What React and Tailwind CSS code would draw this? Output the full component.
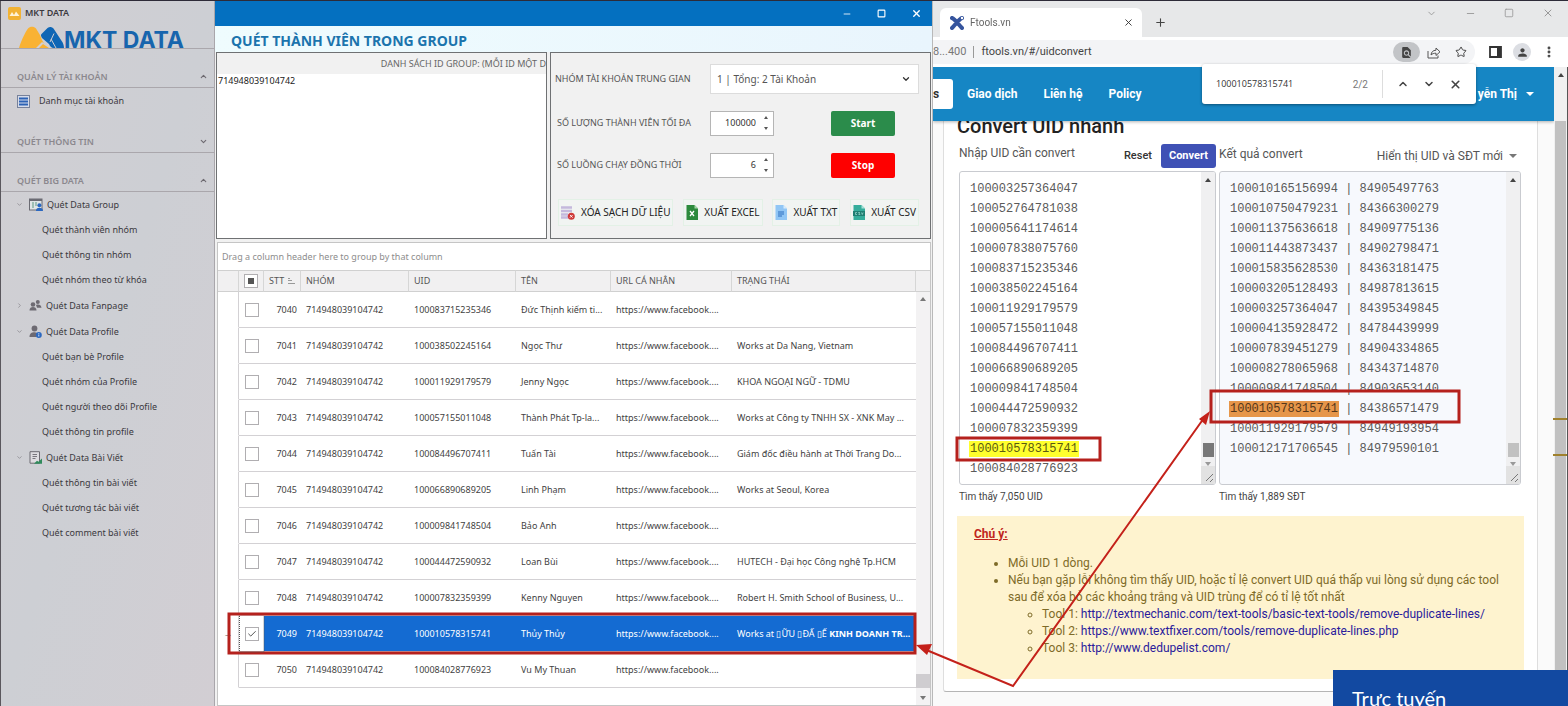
import React, { useState } from "react";
import {
  Check,
  ChevronDown,
  ChevronRight,
  ChevronUp,
  EllipsisVertical,
  Minus,
  Plus,
  Square,
  Star,
  X,
} from "lucide-react";
import { MdFindInPage, MdPerson } from "react-icons/md";

const groupRows = [
  { stt: 7040, uid: "100083715235346", name: "Đức Thịnh kiếm ti...", status: "" },
  { stt: 7041, uid: "100038502245164", name: "Ngọc Thư", status: "Works at Da Nang, Vietnam" },
  { stt: 7042, uid: "100011929179579", name: "Jenny Ngọc", status: "KHOA NGOẠI NGỮ - TDMU" },
  { stt: 7043, uid: "100057155011048", name: "Thành Phát Tp-la...", status: "Works at Công ty TNHH SX - XNK May ..." },
  { stt: 7044, uid: "100084496707411", name: "Tuấn Tài", status: "Giám đốc điều hành at Thời Trang Do..." },
  { stt: 7045, uid: "100066890689205", name: "Linh Phạm", status: "Works at Seoul, Korea" },
  { stt: 7046, uid: "100009841748504", name: "Bảo Anh", status: "" },
  { stt: 7047, uid: "100044472590932", name: "Loan Bùi", status: "HUTECH - Đại học Công nghệ Tp.HCM" },
  { stt: 7048, uid: "100007832359399", name: "Kenny Nguyen", status: "Robert H. Smith School of Business, U..." },
  { stt: 7049, uid: "100010578315741", name: "Thủy Thủy", status: "Works at", selected: true },
  { stt: 7050, uid: "100084028776923", name: "Vu My Thuan", status: "" },
];

const inputUids = [
  "100003257364047",
  "100052764781038",
  "100005641174614",
  "100007838075760",
  "100083715235346",
  "100038502245164",
  "100011929179579",
  "100057155011048",
  "100084496707411",
  "100066890689205",
  "100009841748504",
  "100044472590932",
  "100007832359399",
  "100010578315741",
  "100084028776923",
].join("\n");

const outputUids = [
  "100010165156994 | 84905497763",
  "100010750479231 | 84366300279",
  "100011375636618 | 84909775136",
  "100011443873437 | 84902798471",
  "100015835628530 | 84363181475",
  "100003205128493 | 84987813615",
  "100003257364047 | 84395349845",
  "100004135928472 | 84784439999",
  "100007839451279 | 84904334865",
  "100008278065968 | 84343714870",
  "100009841748504 | 84903653140",
  "100010578315741 | 84386571479",
  "100011929179579 | 84949193954",
  "100012171706545 | 84979590101",
].join("\n");

const GroupIcon = () => (
  <svg width="14" height="13" viewBox="0 0 14 13">
    <rect x="0.5" y="1" width="12.5" height="11" fill="#dfe5e6" stroke="#6b6b73" />
    <rect x="0.5" y="1" width="12.5" height="2" fill="#6b6b73" />
    <path d="M3 5h2M6 5h2M3 7h2M6 7h2M3 9h2" stroke="#5d9a83" />
    <circle cx="10.4" cy="7.3" r="2" fill="#2b68c0" />
    <path d="M7 13c0-2.4 1.300-3.300 3.400-3.300S14 10.600 14 13z" fill="#2b68c0" />
  </svg>
);

const FanpageIcon = () => (
  <svg width="13" height="13" viewBox="0 0 13 13" fill="#6d6a72">
    <circle cx="4" cy="5.500" r="2.300" />
    <circle cx="8.800" cy="3" r="2" />
    <path d="M0.500 11.500c0-2.500 1.500-3.500 3.500-3.500s3.500 1 3.500 3.500z" />
    <path d="M7 6c3-1 5 0 5.500 2.800L8 8.800z" />
  </svg>
);

const ProfileIcon = () => (
  <svg width="13" height="13" viewBox="0 0 13 13">
    <circle cx="5.500" cy="3.500" r="2.900" fill="#6d6a72" />
    <path d="M0.500 12c0-3.500 2-4.800 5-4.800 2 0 3.500 1 4 2.500L7 12z" fill="#6d6a72" />
    <circle cx="9.800" cy="10" r="3" fill="#2b68c0" />
    <path d="M9.800 9.500v2M9.800 8v0.800" stroke="#dfe8f5" strokeWidth="0.900" />
  </svg>
);

const PostIcon = () => (
  <svg width="13" height="13" viewBox="0 0 13 13">
    <path d="M1 0.700h9.500v11.500H1z" fill="#dedce0" stroke="#6d6a72" />
    <path d="M3.500 3.500h4.500M3.500 5.500h4.500M3.500 7.500h3" stroke="#6d6a72" strokeWidth="0.900" />
    <path d="M5 12.800l3-3 1.500 1L13 7.500v5.300z" fill="#2f8a5b" />
  </svg>
);

const menuGroups = [
  {
    title: "Quét Data Group",
    icon: <GroupIcon />,
    open: true,
    items: ["Quét thành viên nhóm", "Quét thông tin nhóm", "Quét nhóm theo từ khóa"],
  },
  { title: "Quét Data Fanpage", icon: <FanpageIcon />, open: false, items: [] },
  {
    title: "Quét Data Profile",
    icon: <ProfileIcon />,
    open: true,
    items: ["Quét bạn bè Profile", "Quét nhóm của Profile", "Quét người theo dõi Profile", "Quét thông tin profile"],
  },
  {
    title: "Quét Data Bài Viết",
    icon: <PostIcon />,
    open: true,
    items: ["Quét thông tin bài viết", "Quét tương tác bài viết", "Quét comment bài viết"],
  },
];

const SectionHeader = ({ title, open }) => (
  <button className="flex h-5 w-full items-center justify-between border-b border-[#aaa7ac] pr-[6px] pb-[2px] pl-4 text-[9px] font-semibold text-[#8b888e]">
    {title}
    {open ? (
      <ChevronUp size={9} strokeWidth={3} className="text-[#6d6a70]" />
    ) : (
      <ChevronDown size={9} strokeWidth={3} className="text-[#6d6a70]" />
    )}
  </button>
);

const Sidebar = () => (
  <aside className="flex w-[215px] shrink-0 flex-col overflow-hidden border-r border-l border-r-[#a9a6ab] border-l-[#5a575d] bg-linear-to-br from-[#d1cfd3] via-[#cdcfd4] to-[#d2ced3] text-[9px] text-[#3b393e]">
    <div className="flex h-6 items-center gap-1 pl-[7px]">
      <svg width="13" height="13" viewBox="0 0 13 13">
        <rect width="13" height="13" rx="2" fill="#f2b233" />
        <path d="M1.500 9l2.500-4 2 3 2-3.500L11.500 9z" fill="#fff3d6" />
      </svg>
      <span className="font-semibold">MKT DATA</span>
    </div>
    <div className="flex h-6 items-end border-b border-[#aaa7ac] pl-[18px]">
      <svg width="45" height="22" viewBox="0 0 45 22" className="shrink-0">
        <path d="M0 22C1 18 6 6 9 2.500c2-2.500 6-2.500 8 0l4 6.500 2 5c2 4 5 8 9 8z" fill="#f9b233" />
        <path d="M17 22l6-6 9 6z" fill="#d1cfd3" />
        <path d="M20 22l4-4 6 4z" fill="#f9b233" />
        <path
          d="M22.500 8l6-6c2-1.500 4-1.500 6 0.500l8.500 13c2 3 2 6 2 6.500H35c-3 0-4-2-5-4L23 12c-1-2-1.500-3-0.500-4z"
          fill="#0f66b5"
        />
        <path d="M31 16l4-8.500M37 22l-5-9" stroke="#d1cfd3" strokeWidth="1" />
      </svg>
      <span className="font-['Inter',sans-serif] text-[23px] leading-4 font-bold whitespace-nowrap text-[#1765ad]">
        MKT DATA
      </span>
    </div>

    <div className="mt-[19px]">
      <SectionHeader title="QUẢN LÝ TÀI KHOẢN" open />
      <a href="#accounts" className="flex h-[26px] items-center gap-[9px] pl-4">
        <svg width="13" height="13" viewBox="0 0 13 13">
          <rect x="0.500" y="0.500" width="12" height="12" fill="#d6dcea" stroke="#77819a" />
          <path d="M2 3.500h9M2 6.500h9M2 9.500h9" stroke="#2c62b5" strokeWidth="2" />
        </svg>
        Danh mục tài khoản
      </a>
    </div>
    <div className="mt-[19px]">
      <SectionHeader title="QUÉT THÔNG TIN" />
    </div>
    <div className="mt-[19px]">
      <SectionHeader title="QUÉT BIG DATA" open />
    </div>

    <nav className="flex flex-col gap-px">
      {menuGroups.map((group) => (
        <div key={group.title}>
          <button className="flex h-[25px] w-full items-center gap-1 pl-[15px]">
            {group.open ? (
              <ChevronDown size={7} className="mr-[2px] text-[#77747a]" />
            ) : (
              <ChevronRight size={7} className="mr-[2px] text-[#77747a]" />
            )}
            {group.icon}
            {group.title}
          </button>
          {group.items.map((item) => (
            <a key={item} href="#scan" className="flex h-[25px] items-center pl-[41px]">
              {item}
            </a>
          ))}
        </div>
      ))}
    </nav>
  </aside>
);

const NumberField = ({ id, value }) => (
  <div className="flex h-[25px] w-16 items-center border border-[#b5b5b5] bg-white">
    <input
      id={id}
      defaultValue={value}
      className="w-full min-w-0 pr-[3px] text-right text-[9px] text-[#333] outline-none"
    />
    <div className="flex w-[14px] shrink-0 flex-col items-center gap-2">
      <button aria-label="Up" className="border-x-[2px] border-b-[3px] border-x-transparent border-b-[#555]" />
      <button aria-label="Down" className="border-x-[2px] border-t-[3px] border-x-transparent border-t-[#555]" />
    </div>
  </div>
);

const FileIcon = ({ dark, light, label }) => (
  <svg width="12" height="15" viewBox="0 0 12 15">
    <path d="M0.500 0h8l3.500 3.500V15H0.500z" fill={dark} />
    <path d="M8.500 0l3.500 3.500H8.500z" fill={light} />
    {label === "x" && <path d="M4 6l4 5M8 6l-4 5" stroke="#fff" strokeWidth="1.300" />}
    {label === "txt" && <path d="M3 7h6M3 9h6M3 11h4" stroke="#2c6fc0" strokeWidth="1.200" />}
    {label === "csv" && (
      <>
        <rect x="0" y="6" width="12" height="5" fill="#1f7f72" />
        <path d="M4 7.500H2.500v2H4M7 7.500H5.500L7 9.500H5.500M8.500 7.500l0.800 2 0.800-2" stroke="#9fded4" strokeWidth="0.700" fill="none" />
      </>
    )}
  </svg>
);

const ExportButton = ({ icon, label }) => (
  <button className="flex h-[27px] items-center gap-[6px] border border-[#e3f1e6] bg-[#f1f4f2] px-[2px] text-[10px] whitespace-nowrap text-[#222]">
    {icon}
    {label}
  </button>
);

const Controls = () => (
  <section className="flex min-w-0 flex-1 flex-col border border-[#6f7173] bg-[#f1f1f1] pr-[11px] text-[9px] text-[#555]">
    <div className="mt-[11px] flex h-[30px] items-center pl-1">
      <label htmlFor="middle-group" className="w-[155px]">
        NHÓM TÀI KHOẢN TRUNG GIAN
      </label>
      <div className="grid flex-1 items-center">
        <select
          id="middle-group"
          className="col-start-1 row-start-1 h-[30px] appearance-none border border-[#dcdcdc] bg-white pl-[6px] text-[10px] text-[#555]"
        >
          <option>1 | Tổng: 2 Tài Khoản</option>
        </select>
        <ChevronDown size={10} strokeWidth={3} className="pointer-events-none col-start-1 row-start-1 mr-2 justify-self-end text-[#333]" />
      </div>
    </div>
    <div className="mt-4 flex h-[26px] items-center pl-[6px]">
      <label htmlFor="max-members" className="w-[153px]">
        SỐ LƯỢNG THÀNH VIÊN TỐI ĐA
      </label>
      <NumberField id="max-members" value="100000" />
      <button className="ml-[57px] h-[25px] w-16 rounded-[2px] bg-[#2b8c4b] text-[10px] font-bold text-white">Start</button>
    </div>
    <div className="mt-4 flex h-[26px] items-center pl-[6px]">
      <label htmlFor="threads" className="w-[153px]">
        SỐ LUỒNG CHẠY ĐỒNG THỜI
      </label>
      <NumberField id="threads" value="6" />
      <button className="ml-[57px] h-[25px] w-16 rounded-[2px] bg-[#fe0000] text-[10px] font-bold text-white">Stop</button>
    </div>
    <div className="mt-[21px] flex justify-between pl-[7px]">
      <ExportButton
        label="XÓA SẠCH DỮ LIỆU"
        icon={
          <svg width="14" height="15" viewBox="0 0 14 15">
            <path d="M0 2.500h11M0 6h11M0 9.500h7M0 12.500h7" stroke="#c4b8dc" strokeWidth="2.400" />
            <circle cx="10.300" cy="11.300" r="3.500" fill="#cf3a3a" />
            <path d="M9 10l2.600 2.600M11.600 10L9 12.600" stroke="#fff" strokeWidth="0.900" />
          </svg>
        }
      />
      <ExportButton label="XUẤT EXCEL" icon={<FileIcon dark="#2c8a3c" light="#a5d6a7" label="x" />} />
      <ExportButton label="XUẤT TXT" icon={<FileIcon dark="#90c6f5" light="#d7ecfc" label="txt" />} />
      <ExportButton label="XUẤT CSV" icon={<FileIcon dark="#35ad9b" light="#a8e2d8" label="csv" />} />
    </div>
  </section>
);

const Checkbox = ({ label, checked }) => {
  const [on, setOn] = useState(!!checked);
  return (
    <label className="mx-auto grid h-[14px] w-[14px] place-items-center">
      <input
        type="checkbox"
        aria-label={label}
        checked={on}
        onChange={() => setOn(!on)}
        className="col-start-1 row-start-1 h-[14px] w-[14px] appearance-none border border-[#b0aeb1] bg-white"
      />
      {on && <Check size={10} className="pointer-events-none col-start-1 row-start-1 text-[#333]" />}
    </label>
  );
};

const HeadCell = ({ children }) => (
  <th className="border-r border-[#d6d6d6] px-[5px] text-left font-normal whitespace-nowrap">{children}</th>
);

const MembersTable = () => (
  <section className="mt-[3px] mr-px ml-[2px] flex min-h-0 flex-1 flex-col border border-[#c5c5c5] bg-white">
    <div className="flex h-[27px] shrink-0 items-center pl-1 text-[9px] text-[#8d8d8d]">
      Drag a column header here to group by that column
    </div>
    <div className="flex min-h-0 flex-1">
      <div className="min-w-0 flex-1">
        <table className="w-full table-fixed border-separate border-spacing-0 text-[9px] text-[#3f3f3f]">
          <colgroup>
            <col className="w-[21px]" />
            <col className="w-[25px]" />
            <col className="w-[37px]" />
            <col className="w-[108px]" />
            <col className="w-[107px]" />
            <col className="w-[95px]" />
            <col className="w-[121px]" />
            <col />
          </colgroup>
          <thead>
            <tr className="h-[22px] bg-[#f1f0f1] text-[#555] [&>th]:border-y [&>th]:border-y-[#d0d0d0]">
              <HeadCell />
              <th className="border-r border-[#d6d6d6]">
                <span className="mx-auto flex h-[14px] w-[14px] items-center justify-center border border-[#b0aeb1] bg-white">
                  <span className="h-[6px] w-[6px] bg-[#555]" />
                </span>
              </th>
              <th className="border-r border-[#d6d6d6] pl-[5px] text-left font-normal">
                <span className="flex items-center gap-1">
                  STT
                  <svg width="7" height="6" viewBox="0 0 7 6">
                    <path d="M0 0.500h2M0 2.500h4M0 5.500h7" stroke="#999" />
                  </svg>
                </span>
              </th>
              <HeadCell>NHÓM</HeadCell>
              <HeadCell>UID</HeadCell>
              <HeadCell>TÊN</HeadCell>
              <HeadCell>URL CÁ NHÂN</HeadCell>
              <HeadCell>TRẠNG THÁI</HeadCell>
            </tr>
          </thead>
          <tbody>
            {groupRows.map((row) => (
              <tr
                key={row.stt}
                className={
                  row.selected
                    ? "h-9 whitespace-nowrap text-white [&>td]:border-b [&>td]:border-[#d3d1d4] [&>td]:pl-[5px] [&>td:nth-child(n+3)]:bg-[#146bd2]"
                    : "h-9 whitespace-nowrap [&>td]:border-b [&>td]:border-[#d3d1d4] [&>td]:pl-[5px]"
                }
              >
                <td className="border-r border-b-transparent! p-0! text-center text-[#555]">
                  {row.selected ? "→" : ""}
                </td>
                <td className="p-0!">
                  <Checkbox label={`Row ${row.stt}`} checked={row.selected} />
                </td>
                <td className="p-0! pr-1! text-right">{row.stt}</td>
                <td>714948039104742</td>
                <td>{row.uid}</td>
                <td>{row.name}</td>
                <td>https://www.facebook....</td>
                <td>
                  {row.status}
                  {row.selected && (
                    <>
                      {" "}
                      ▯ỮU ▯ĐẤ ▯Ế <b>KINH DOANH TR...</b>
                    </>
                  )}
                </td>
              </tr>
            ))}
          </tbody>
        </table>
      </div>
      <div className="flex w-[14px] shrink-0 flex-col items-center">
        <div className="h-[22px] w-full border-y border-[#d0d0d0] bg-[#f1f0f1]" />
        <div className="flex w-full flex-1 flex-col items-center bg-[#f3f2f3] py-[5px]">
          <span className="border-x-[3px] border-b-[4px] border-x-transparent border-b-[#777]" />
          <span className="mt-auto mb-2 h-[14px] w-full bg-[#cfcdd0]" />
          <span className="border-x-[3px] border-t-[4px] border-x-transparent border-t-[#777]" />
        </div>
      </div>
    </div>
  </section>
);

const ScanWindow = () => (
  <main className="flex w-[718px] shrink-0 flex-col border-r border-[#b9b9b9] bg-[#f1f1f1]">
    <div className="flex h-[25px] shrink-0 items-center justify-end gap-[25px] bg-[#0470c0] pr-[10px] text-white">
      <button aria-label="Minimize"><Minus size={10} /></button>
      <button aria-label="Maximize"><Square size={9} strokeWidth={3} /></button>
      <button aria-label="Close"><X size={11} strokeWidth={3} /></button>
    </div>
    <h1 className="flex h-[26px] shrink-0 items-center bg-linear-to-r from-[#effcfe] to-[#e9f5fd] pt-[2px] pl-4 text-[14px] font-bold text-[#1b74ad]">
      QUÉT THÀNH VIÊN TRONG GROUP
    </h1>
    <div className="flex h-[187px] shrink-0 gap-[3px] pr-px pl-px">
      <section className="flex w-[331px] shrink-0 flex-col border border-[#6f7173]">
        <label htmlFor="group-ids" className="flex h-[21px] shrink-0 items-center justify-end text-[9px] whitespace-nowrap text-[#666]">
          DANH SÁCH ID GROUP: (MỖI ID MỘT D
        </label>
        <textarea
          id="group-ids"
          defaultValue="714948039104742"
          className="w-full flex-1 resize-none bg-white px-px text-[9px] leading-[13px] text-[#222] outline-none"
        />
      </section>
      <Controls />
    </div>
    <MembersTable />
  </main>
);

const ListScrollbar = ({ dark }) => (
  <div className="flex w-[14px] shrink-0 flex-col items-center bg-[#f0f0f1] pt-[6px]">
    <span className="border-x-[3px] border-b-[4px] border-x-transparent border-b-[#444]" />
    <span className={dark ? "mt-auto h-[14px] w-[11px] bg-[#787878]" : "mt-auto h-[14px] w-[11px] bg-[#c1c1c1]"} />
    <span className="mt-[5px] border-x-[3px] border-t-[4px] border-x-transparent border-t-[#999]" />
    <svg width="14" height="18" viewBox="0 0 14 18" className="bg-[#e2e2e2]">
      <path d="M5 15l7-7M9 16l3-3" stroke="#777" />
    </svg>
  </div>
);

const UidBox = ({ id, value, dark, className }) => (
  <div className={`flex h-[314px] overflow-hidden rounded-[3px] border border-[#c9cbd0] ${className}`}>
    <textarea
      id={id}
      defaultValue={value}
      className="min-w-0 flex-1 resize-none overflow-hidden bg-transparent px-[10px] pt-[7px] font-['Liberation_Mono',monospace] text-[12px] leading-[20px] text-[#5a5a5a] outline-none"
    />
    <ListScrollbar dark={dark} />
  </div>
);

const BrowserChrome = () => (
  <header className="shrink-0">
    <div className="flex h-9 items-end bg-[#e7e8e9] pl-[7px]">
      <div className="flex h-[29px] w-[202px] items-center gap-[6px] rounded-t-[6px] bg-white pr-2 pl-[10px]">
        <svg width="14" height="14" viewBox="0 0 14 14">
          <path d="M2 2c3 1 7 7 10 10M12 2C9 3 5 9 2 12" stroke="#35549d" strokeWidth="4" strokeLinecap="round" />
          <circle cx="12" cy="2" r="1.200" fill="#fff" />
        </svg>
        <span className="flex-1 text-[10px] text-[#666]">Ftools.vn</span>
        <button aria-label="Close tab"><X size={11} className="text-[#333]" /></button>
      </div>
      <button aria-label="New tab" className="mb-2 ml-3"><Plus size={13} className="text-[#444]" /></button>
      <div className="mb-[18px] ml-auto flex items-center gap-7 pr-[14px] text-[#999]">
        <ChevronDown size={11} />
        <button aria-label="Minimize"><Minus size={11} /></button>
        <button aria-label="Maximize"><Square size={10} /></button>
        <button aria-label="Close"><X size={12} /></button>
      </div>
    </div>
    <div className="flex h-[30px] items-center bg-white pr-3 text-[#444]">
      <div className="flex h-6 flex-1 items-center rounded-r-full bg-[#f3f4f6] text-[11px]">
        <span className="text-[#777]">8...400</span>
        <span className="mx-[7px] h-3 w-px bg-[#999]" />
        <span className="flex-1">ftools.vn/#/uidconvert</span>
        <button aria-label="Find" className="flex h-5 w-[27px] items-center justify-center rounded-full bg-[#c2c4c7]">
          <MdFindInPage size={13} />
        </button>
        <button aria-label="Share" className="ml-[7px]">
          <svg width="14" height="13" viewBox="0 0 14 13" fill="none" stroke="#555" strokeLinejoin="round">
            <path d="M1 5v7h10V9.500" />
            <path d="M4 9c0.300-3 2-4.700 5-4.800V2l4 3.800-4 3.700V7.200C6.800 7.200 5.300 7.700 4 9z" />
          </svg>
        </button>
        <button aria-label="Bookmark" className="mr-2 ml-[14px]"><Star size={12} /></button>
      </div>
      <svg width="13" height="12" viewBox="0 0 13 12" className="ml-[14px]">
        <path d="M1 1h11v10H1z" fill="none" stroke="#333" strokeWidth="1.800" />
        <path d="M8 1h4v10H8z" fill="#333" />
      </svg>
      <span className="mx-[11px] flex h-[18px] w-[18px] items-center justify-center rounded-full bg-[#dcdee3]">
        <MdPerson size={13} />
      </span>
      <button aria-label="Menu"><EllipsisVertical size={14} strokeWidth={3} /></button>
    </div>
  </header>
);

const FindBar = () => (
  <div className="absolute top-[63px] right-[92px] z-20 flex h-10 w-[274px] items-center rounded-[3px] bg-white px-[14px] text-[#444] shadow-[0_1px_3px_rgba(0,0,0,0.4)]">
    <input
      aria-label="Find in page"
      defaultValue="100010578315741"
      className="min-w-0 flex-1 font-['Open_Sans',sans-serif] text-[9px] text-[#333] outline-none"
    />
    <span className="mr-[14px] text-[10px] text-[#777]">2/2</span>
    <span className="h-7 w-px bg-[#ddd]" />
    <button aria-label="Previous" className="ml-[14px]"><ChevronUp size={12} strokeWidth={3} /></button>
    <button aria-label="Next" className="mx-[14px]"><ChevronDown size={12} strokeWidth={3} /></button>
    <button aria-label="Close find bar"><X size={13} strokeWidth={3} /></button>
  </div>
);

const tools = [
  "http://textmechanic.com/text-tools/basic-text-tools/remove-duplicate-lines/",
  "https://www.textfixer.com/tools/remove-duplicate-lines.php",
  "http://www.dedupelist.com/",
];

const ConvertPage = () => (
  <div className="flex min-h-0 flex-1">
    <div className="flex min-w-0 flex-1 flex-col overflow-hidden bg-[#fafafa]">
      <nav className="z-10 flex h-[54px] shrink-0 items-center bg-[#1686c4] text-[12px] font-bold text-white shadow-[0_1px_3px_rgba(0,0,0,0.3)]">
        <a href="#services" className="mr-[14px] flex h-[30px] w-5 items-center rounded-r-[3px] bg-white text-[#333]">s</a>
        <a href="#giao-dich">Giao dịch</a>
        <a href="#lien-he" className="ml-[26px]">Liên hệ</a>
        <a href="#policy" className="ml-[26px]">Policy</a>
        <button className="mr-[20px] ml-auto flex items-center gap-[9px]">
          yễn Thị
          <span className="border-x-[4px] border-t-[4px] border-x-transparent border-t-white" />
        </button>
      </nav>
      <div className="mr-[16px] ml-[10px] h-[571px] shrink-0 rounded-b-[3px] border border-t-0 border-[#b5b5b5] border-x-[#dedede] bg-white px-[13px]">
        <h2 className="-mt-[7px] h-6 text-[20px] leading-6 font-medium text-[#222]">Convert UID nhanh</h2>
        <div className="mt-[6px] flex gap-[3px] pl-[2px]">
          <div className="w-[257px] shrink-0">
            <div className="flex h-[27px] items-start">
              <label htmlFor="uid-input" className="mr-auto text-[12px] text-[#555]">Nhập UID cần convert</label>
              <button className="h-6 pr-[9px] text-[11px] font-medium text-[#333]">Reset</button>
              <button className="h-6 rounded-[3px] bg-[#3f51b5] px-2 text-[11px] font-bold text-white">Convert</button>
            </div>
            <UidBox id="uid-input" value={inputUids} dark className="bg-white" />
          </div>
          <div className="min-w-0 flex-1 pr-[3px]">
            <div className="flex h-[27px] items-center">
              <label htmlFor="uid-output" className="mr-auto pb-2 text-[12px] text-[#555]">Kết quả convert</label>
              <button className="flex items-center gap-[6px] pr-1 pb-[3px] text-[12px] text-[#555]">
                Hiển thị UID và SĐT mới
                <span className="border-x-[4px] border-t-[4px] border-x-transparent border-t-[#777]" />
              </button>
            </div>
            <UidBox id="uid-output" value={outputUids} className="bg-[#f7f9fd]" />
          </div>
        </div>
        <div className="mt-1 flex gap-[3px] pl-[2px] text-[10px] text-[#444]">
          <p className="w-[257px]">Tìm thấy 7,050 UID</p>
          <p>Tìm thấy 1,889 SĐT</p>
        </div>
        <div className="mt-3 h-[163px] bg-[#fef3cf] px-[17px] pt-[10px] text-[12px] leading-[17px] text-[#7e6b28]">
          <p className="font-bold text-[#c0261d] underline">Chú ý:</p>
          <ul className="mt-3 list-disc pl-[34px]">
            <li>Mỗi UID 1 dòng.</li>
            <li>
              Nếu bạn gặp lỗi không tìm thấy UID, hoặc tỉ lệ convert UID quá thấp vui lòng sử dụng các tool sau để xóa bỏ
              các khoảng trắng và UID trùng để có tỉ lệ tốt nhất
              <ul className="list-[circle] pl-[34px]">
                {tools.map((url, i) => (
                  <li key={url}>
                    Tool {i + 1}: <a href={url} className="text-[#2a1b9c]">{url}</a>
                  </li>
                ))}
              </ul>
            </li>
          </ul>
        </div>
      </div>
    </div>
    <div className="flex w-[14px] shrink-0 flex-col items-center border-r border-[#555] bg-[#f0f0f0]">
      <span className="mt-[6px] mb-11 border-x-[3px] border-b-[4px] border-x-transparent border-b-[#444]" />
      <div className="w-[11px] flex-1 bg-[#c1c1c1]" />
    </div>
  </div>
);

// red boxes and the two arrows that link the matching UIDs
const Annotations = () => (
  <svg className="pointer-events-none absolute -top-px left-0 z-20" width="1568" height="706" viewBox="0 0 1568 706" fill="none">
    <g stroke="#b5211d" strokeWidth="3">
      <rect x="229" y="614" width="686" height="39" />
      <rect x="957" y="438" width="143" height="22" />
      <rect x="1211" y="391" width="248" height="31" />
    </g>
    <path d="M239.500 616v36H264v-36" stroke="#555" strokeDasharray="1 1" />
    <path d="M924 649L1013 686L1204 418" stroke="#c4211a" strokeWidth="2" />
    <path d="M916 645l16-1-5 11zM1210 411l-4 14-7-6z" fill="#c4211a" />
    <path d="M1553 419h14M1553 455h14" stroke="#a0812c" strokeWidth="2" />
  </svg>
);

const App = () => {
  return (
    <div className="relative flex h-screen overflow-hidden border-t border-[#2d2b38] font-['Noto_Sans','Open_Sans',sans-serif]">
      <Sidebar />
      <ScanWindow />
      <div className="relative flex min-w-0 flex-1 flex-col font-['Roboto',sans-serif]">
        <BrowserChrome />
        <ConvertPage />
        <FindBar />
        <span className="absolute top-[440px] left-[36px] h-4 w-[110px] bg-[#ffff2e] mix-blend-multiply" />
        <span className="absolute top-[400px] left-[296px] h-4 w-[110px] bg-[#ee9a4a] mix-blend-multiply" />
      </div>
      <div className="absolute right-0 bottom-0 z-30 h-9 w-[235px] overflow-hidden bg-[#1249a1] pt-4 pl-[19px] font-['Lato',sans-serif] text-[20px] leading-6 text-white">
        Trực tuyến
      </div>
      <Annotations />
    </div>
  );
};

export default App;
